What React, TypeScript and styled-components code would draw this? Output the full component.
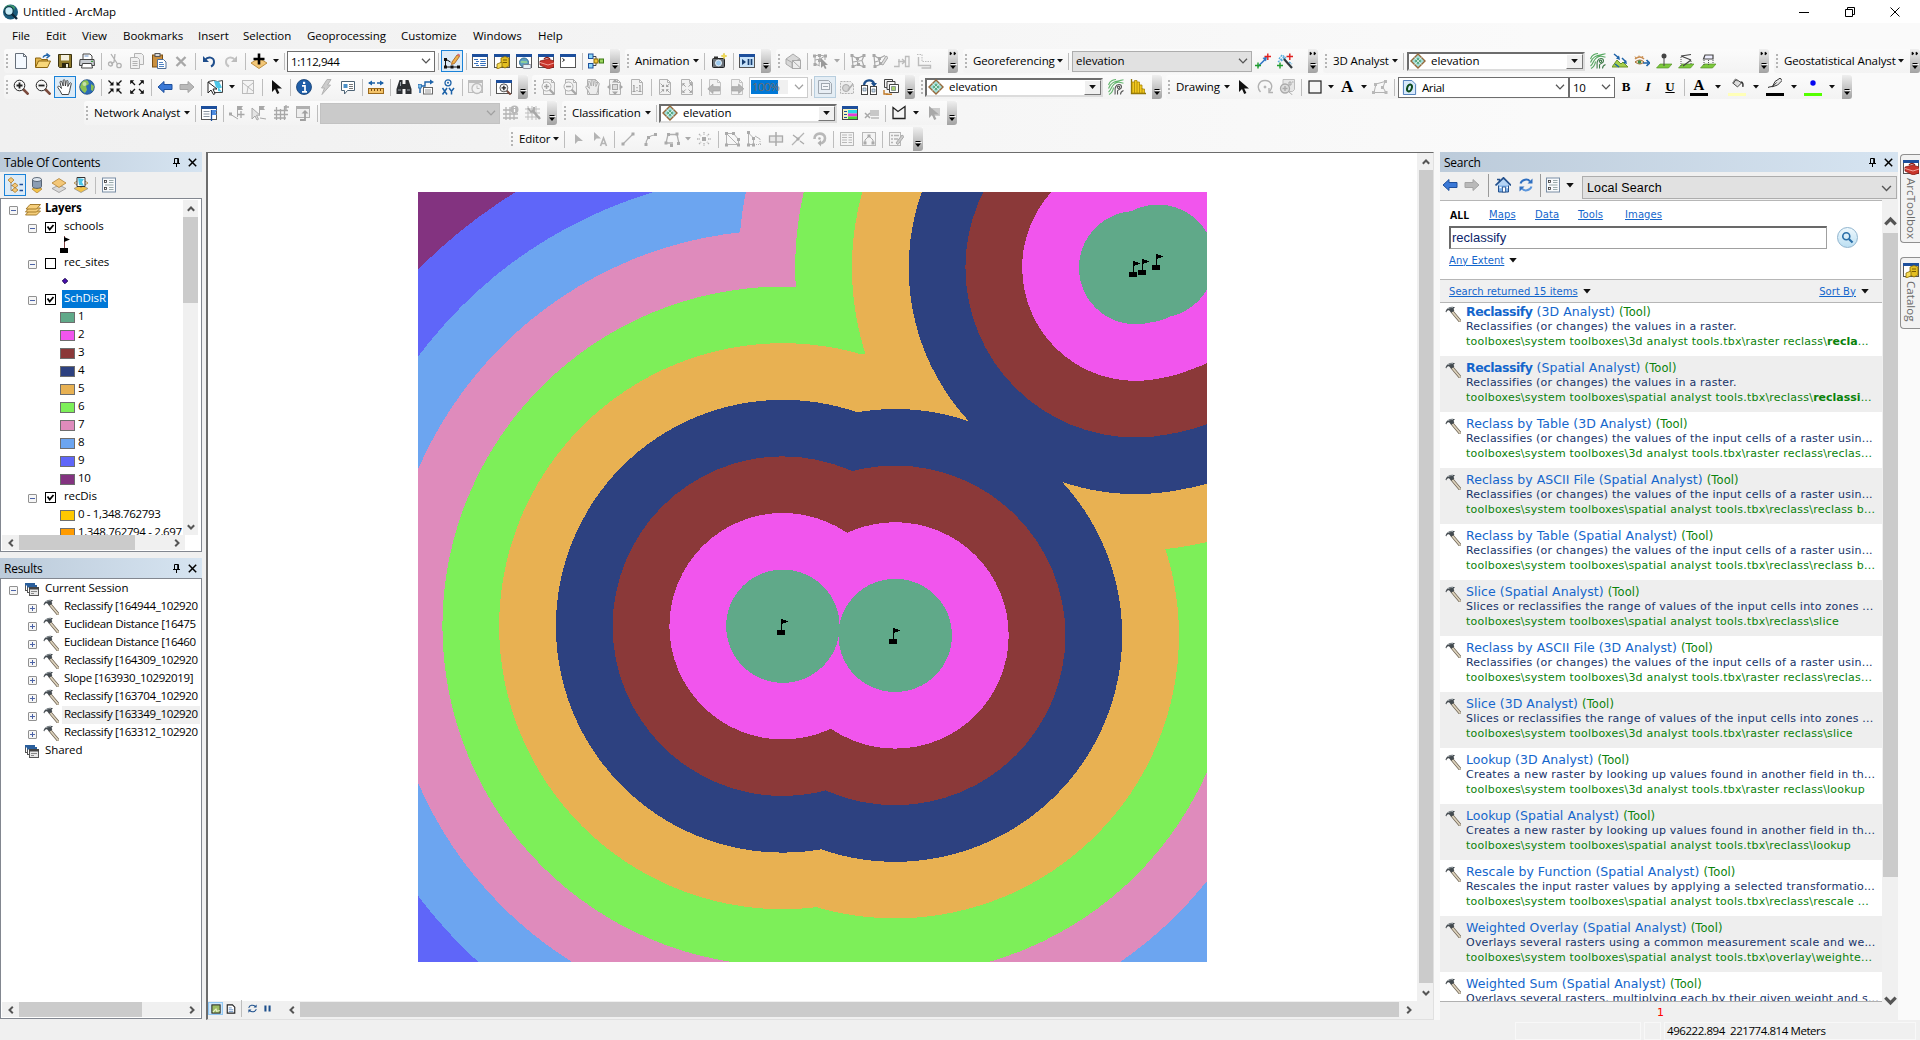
import React from 'react';
import styled, { createGlobalStyle, css } from 'styled-components';

const Global = createGlobalStyle`
  * { box-sizing: border-box; }
  body {
    margin: 0;
    overflow: hidden;
    background: #f0f0f0;
    font: 11.5px/18px 'Open Sans', 'Noto Sans', sans-serif;
    letter-spacing: -0.05px;
    color: #000;
  }
`;

/* ---------- icons ---------- */

const Svg = styled.svg`
  display: block;
  flex: none;
`;

const DIM = '#b2b2b2';

const Page = ({ c = '#7c8a9c', f = '#f4f9ff' }: { c?: string; f?: string }) => (
  <path d="M2.5 .5h8l3 3v12h-11z M10.5 .5v3h3" fill={f} stroke={c} />
);
const Win = ({ dim }: { dim?: boolean }) => (
  <>
    <rect x=".5" y="1.5" width="15" height="13" fill="#fff" stroke={dim ? DIM : '#555'} />
    <rect x="0" y="1" width="16" height="3" fill={dim ? DIM : '#1d4f9c'} />
  </>
);
const Lens = ({ sign, c = '#222', h = '#7a4a3c' }: { sign: string; c?: string; h?: string }) => (
  <>
    <path d="M10 10l5.5 5.5" stroke={h} strokeWidth="2.6" />
    <circle cx="6.5" cy="6.5" r="5.3" fill="#f6f6f6" stroke={c} strokeWidth="1" />
    <path d={sign} stroke={c} strokeWidth="1.8" />
  </>
);
const PLUS = 'M3.5 6.5h6M6.5 3.5v6';
const MINUS = 'M3.5 6.5h6';
const Handle = ({ p, c }: { p: number[][]; c: string }) => (
  <>
    {p.map(([x, y]) => (
      <rect key={`${x}-${y}`} x={x} y={y} width="3" height="3" fill={c} />
    ))}
  </>
);
const ArrowL = ({ f, s }: { f: string; s: string }) => (
  <path d="M1 8l6-5.5v3h8v5H7v3z" fill={f} stroke={s} />
);
const ArrowR = ({ f, s }: { f: string; s: string }) => (
  <path d="M15 8L9 2.5v3H1v5h8v3z" fill={f} stroke={s} />
);
const Cursor = ({ c }: { c: string }) => <path d="M4 1v12l3-3 2.2 5 2.2-1-2.2-4.6H14z" fill={c} />;
const HandShape = ({ c, f }: { c: string; f: string }) => (
  <path
    d="M5 15.5C4 13 2.5 11 .8 8.5c-.5-1 .8-1.8 1.700-1L4.500 9.500 3 3.200c0-1.200 1.500-1.400 1.900-.2L6.200 7V1.600c0-1.200 1.700-1.200 1.800 0L8.400 7l.9-4.800c.3-1.100 1.800-.9 1.700.3L10.800 7.500l1.900-3.300c.6-1 1.900-.3 1.500.8L13 10c-.3 2.500-1 4-1.500 5.500z"
    fill={f}
    stroke={c}
    strokeWidth=".9"
  />
);
const Contour = ({ a, b }: { a: string; b: string }) => (
  <g fill="none" strokeWidth="1.1">
    <path d="M.5 6C2 1.500 5 1 8 .5M.5 9.500C3 3 6 3 15.500 .8M.5 13C4 11 3 5 9 3.500c4-.8 5 1 6.500 .5M1 15.500c4-2 4-4 4.500-7" stroke={a} />
    <path d="M7 15.500c.5-3-.5-5 .5-7.500 1.500-3.500 6-3 6 0s-4 2-4 4 .2 2 0 3.500M12.500 15.500c0-2 .5-3 3-4" stroke={b} />
    <circle cx="10.500" cy="8.300" r="1.200" stroke={b} />
  </g>
);
const Diamond = () => (
  <>
    <path d="M8 1l7 7-7 7-7-7z" fill="#a7e0dc" stroke="#96683a" strokeWidth="1.400" />
    <path d="M8 4.500l3.500 3.500L8 11.500 4.500 8z" fill="#57a882" />
    <path d="M4.500 4.500l7 7M11.500 4.500l-7 7" stroke="#e8f7f0" strokeWidth=".8" />
  </>
);
const Toolbox = ({ y = 5 }: { y?: number }) => (
  <>
    <path d={`M6 ${y + 1}q3-3 6 0`} fill="none" stroke="#8c1b14" strokeWidth="1.300" />
    <path d={`M2 ${y + 3}l8-2 6 2v6l-6 2-8-4z`} fill="#c8352b" stroke="#7d130d" strokeWidth=".7" />
    <path d={`M2 ${y + 4.500}l8 2.500 6-2`} fill="none" stroke="#f0a099" />
  </>
);
const Cabinet = () => (
  <>
    <path d="M7 5l4-1.500 4 1.500v8l-4 2-4-2z" fill="#e3bf22" stroke="#8a6b00" strokeWidth=".8" />
    <path d="M3 11l5-2v5l-5 2z" fill="#f6dc55" stroke="#8a6b00" strokeWidth=".8" />
    <path d="M9 7h4M9 9.500h4" stroke="#7a5c00" />
  </>
);
const Hammer = () => (
  <>
    <path d="M7 5.500l8 9.500" stroke="#6d6253" strokeWidth="3.200" strokeLinecap="round" />
    <path d="M7 5.500l8 9.500" stroke="#ddd3bd" strokeWidth="1.800" strokeLinecap="round" />
    <path d="M.5 5.500C1.500 2.500 4 .8 7.500 .8l2.500 .4-1.500 1.600.8 1.700-2.800 2.300-2.300-2.300C3 4 2 4.600 1.200 6.500z" fill="#444b50" />
    <path d="M3 2.800C4.500 1.800 6 1.500 8 1.500" stroke="#a9b2b7" fill="none" strokeWidth=".8" />
  </>
);
const Stack = ({ top, mid }: { top: string; mid?: string }) => (
  <>
    <path d="M8 8l7 3.500-7 4-7-4z" fill={mid || '#d8d8d8'} stroke="#8a8a8a" strokeWidth=".7" />
    <path d="M8 1.500l7 4.500-7 4.500L1 6z" fill={top} stroke="#a87420" strokeWidth=".7" />
  </>
);
const Compress = ({ c }: { c: string }) => (
  <>
    <path d="M1.500 1.500l4 4M14.500 1.500l-4 4M1.500 14.500l4-4M14.500 14.500l-4-4" stroke={c} strokeWidth="1.300" />
    <path d="M6.500 2.500v4h-4zM9.500 2.500v4h4zM6.500 13.500v-4h-4zM9.500 13.500v-4h4z" fill={c} />
  </>
);
const Expand = ({ c }: { c: string }) => (
  <>
    <path d="M2 2l4 4M14 2l-4 4M2 14l4-4M14 14l-4-4" stroke={c} strokeWidth="1.300" />
    <path d="M1.200 5.200v-4h4zM14.800 5.200v-4h-4zM1.200 10.800v4h4zM14.800 10.800v4h-4z" fill={c} />
  </>
);

const icons: Record<string, React.ReactNode> = {
  app: (
    <>
      <circle cx="8.500" cy="8" r="7.500" fill="#1b5c7c" />
      <path d="M3 3c3-3 8-2 10 0l-1 4-4 1-1 4-3-2-2-4z" fill="#3f9b6a" />
      <circle cx="7" cy="7" r="4.300" fill="#c8ecf6" stroke="#10384f" strokeWidth="1.300" />
      <path d="M10 10l5 5" stroke="#10283a" strokeWidth="2.400" />
    </>
  ),
  new: <Page c="#666f7a" />,
  open: (
    <>
      <path d="M.5 14V5h5l1 1.500h6V8" fill="#e2b64f" stroke="#8c6510" />
      <path d="M.5 14.500L3.500 8h12l-3 6.500z" fill="#f8d77a" stroke="#8c6510" />
      <path d="M8 4.500C9 2 11 2 13 2.500M11.500 .5l3 2.300-3 2.400" fill="none" stroke="#1d62a8" strokeWidth="1.400" />
    </>
  ),
  save: (
    <>
      <path d="M1.500 1.500h13v13h-12l-1-1z" fill="#8f7a2c" stroke="#3b3212" />
      <rect x="4" y="2" width="8" height="5.500" fill="#f3efdf" />
      <rect x="5" y="10" width="7" height="4.500" fill="#2d2710" />
      <rect x="9" y="11" width="2" height="3.500" fill="#f3efdf" />
    </>
  ),
  print: (
    <>
      <path d="M4 6V1h7l2 2v3" fill="#fff" stroke="#444" />
      <path d="M5.500 3h4" stroke="#6a93c9" />
      <path d="M1 6.500h14l.5 6H.5z" fill="#c9cdd2" stroke="#444" />
      <path d="M3.500 10.500h9l1 4.500h-11z" fill="#fff" stroke="#444" />
      <rect x="12" y="7.800" width="2" height="1.200" fill="#3d9b3d" />
    </>
  ),
  cut: (
    <g stroke={DIM} fill="none" strokeWidth="1.300">
      <path d="M4 1l6.500 10M8 1L7 9l-3 2" />
      <circle cx="3.500" cy="11" r="2" />
      <circle cx="12" cy="12.500" r="2.200" />
    </g>
  ),
  copy: (
    <g fill="#f0f0f0" stroke={DIM}>
      <path d="M5.500 .5h7l2 2v9h-9z" />
      <path d="M1.500 4.500h7l2 2v9h-9z" />
      <path d="M3.500 8.500h5M3.500 10.500h5M3.500 12.500h5" />
    </g>
  ),
  paste: (
    <>
      <rect x="1.500" y="2" width="10" height="12" fill="#c98f3e" stroke="#7b4e12" />
      <rect x="4" y=".5" width="5" height="3" fill="#d8d8d8" stroke="#555" />
      <path d="M6.500 6.500h6l2.500 2.500v6.500H6.500z" fill="#fff" stroke="#4f6f99" />
      <path d="M8 9.500h4M8 11.500h5M8 13.500h5" stroke="#4f83c4" />
    </>
  ),
  del: <path d="M3.500 4l9 9M12.500 4l-9 9" stroke="#a8a8a8" strokeWidth="2.400" />,
  undo: (
    <>
      <path d="M2 3v6h6z" fill="#1f4e8c" />
      <path d="M4 7C7 3 13 4 13 9c0 2-1 3.500-3 4.500" fill="none" stroke="#1f4e8c" strokeWidth="2" />
    </>
  ),
  redo: (
    <>
      <path d="M14 3v6H8z" fill="#bcbcbc" />
      <path d="M12 7C9 3 3 4 3 9c0 2 1 3.500 3 4.500" fill="none" stroke="#c4c4c4" strokeWidth="2" />
    </>
  ),
  add: (
    <>
      <path d="M8 5l8 5-8 5.500L0 10z" fill="#f3c778" stroke="#b07c26" strokeWidth=".8" />
      <path d="M8 .5v11M2.500 6h11" stroke="#000" strokeWidth="2.600" />
    </>
  ),
  edit: (
    <>
      <path d="M1.500 6v8h13M1.500 6l5 3" stroke="#111" fill="none" />
      <Handle p={[[0, 5], [0, 12.500], [6.500, 12.500], [13, 12.500]]} c="#111" />
      <path d="M8 9l5-7 2.500 1.500-5 7L7.500 11.500z" fill="#f1b14a" stroke="#9c5a1a" strokeWidth=".8" />
      <path d="M13 2l1-1.500 2.500 1.500-1 1.500z" fill="#d86b6b" />
    </>
  ),
  toc: (
    <>
      <Win />
      <path d="M2 6.500h4M8 6.500h6M4 8.500h3M8.500 8.500h5M2 10.500h4M8 10.500h6M4 12.500h3M8.500 12.500h5" stroke="#3771bd" />
    </>
  ),
  catalog: (
    <>
      <Win />
      <Cabinet />
    </>
  ),
  searchwin: (
    <>
      <Win />
      <circle cx="8" cy="9.500" r="4.500" fill="#5f9fc2" stroke="#356f92" />
      <path d="M5 9.500c2-2 4 1 6-1" stroke="#8fd09a" strokeWidth="2" fill="none" />
      <rect x="7" y="11.500" width="8" height="4" rx="1" fill="#e8f2f8" stroke="#667" strokeWidth=".7" />
    </>
  ),
  toolbox: (
    <>
      <Win />
      <Toolbox />
    </>
  ),
  python: (
    <>
      <Win />
      <path d="M2.500 5.500l2 1.500-2 1.500" fill="none" stroke="#111" />
    </>
  ),
  model: (
    <>
      <path d="M4 3.500h4v9H4M8 8h6" stroke="#444" fill="none" />
      <rect x=".5" y="1" width="4.500" height="4.500" fill="#8ed8f8" stroke="#1d4f9c" />
      <rect x=".5" y="10.500" width="4.500" height="4.500" fill="#8ed8f8" stroke="#1d4f9c" />
      <rect x="6" y="6" width="4" height="4" fill="#f2c53d" stroke="#8a6b00" />
      <rect x="11.500" y="6" width="4" height="4" fill="#9ad45f" stroke="#3c7a12" />
    </>
  ),
  camera: (
    <>
      <rect x="1.500" y="5.500" width="12" height="9" rx="1" fill="#6a7178" stroke="#222" />
      <rect x="3" y="3.500" width="4" height="2" fill="#333" />
      <circle cx="7.500" cy="10" r="3" fill="#9cc9ee" stroke="#e8f0f6" />
      <path d="M13 0l.8 2.200L16 3l-2.200.8L13 6l-.8-2.200L10 3l2.200-.8z" fill="#f6e04a" stroke="#d9bd2c" strokeWidth=".5" />
    </>
  ),
  play: (
    <>
      <rect x=".5" y="1.500" width="15" height="13" fill="#c8e3fa" stroke="#555" />
      <rect x="0" y="1" width="16" height="3" fill="#1d4f9c" />
      <path d="M3 6v6l4-3z" fill="#173f73" />
      <path d="M9.500 6v6M12.500 6v6" stroke="#173f73" strokeWidth="1.700" />
    </>
  ),
  geo3d: (
    <g fill="#d8d8d8" stroke="#aaa">
      <path d="M1 6l7-5 7 5v4l-8 5-6-4z" />
      <path d="M1 6l6 3.500L15 6M7 9.500v5" fill="none" />
      <rect x="7.500" y="7.500" width="8" height="8" fill="#eee" />
      <path d="M8 8l7.500 7" fill="none" />
    </g>
  ),
  topo1: (
    <>
      <path d="M1 3l5-1 6 1M2 3v8l5 2M7 3L6 12M2 7l5-1 5-3M12 3v4" fill="none" stroke="#a8a8a8" />
      <Handle p={[[0, 1.500], [5, 1], [11, 1.500], [0.500, 10], [5, 6]]} c="#a8a8a8" />
      <path d="M8 5v10l2.300-2.300L12 16l1.500-.8-1.500-3.200h3z" fill="#9a9a9a" />
    </>
  ),
  topo2: (
    <>
      <path d="M2 2.500l5 3 7-3M2 2.500l1 11 5-2 6 2.500M14 2.500l-2 5 2 6M7 5.500l1 6M3 9l9-1.500" fill="none" stroke="#a8a8a8" strokeWidth="1.200" />
      <Handle p={[[0.500, 1], [6, 4], [12.500, 1], [1.500, 12], [7, 10], [12.500, 12]]} c="#a8a8a8" />
    </>
  ),
  topo3: (
    <>
      <path d="M2 2.500l5 3 6-3M2 2.500l1 11 5-2M7 5.500l1 6M3 9l5-1.500" fill="none" stroke="#a8a8a8" strokeWidth="1.200" />
      <Handle p={[[0.500, 1], [6, 4], [1.500, 12], [7, 9]]} c="#a8a8a8" />
      <path d="M9 11l5-8 2 1.500-5 7.500z" fill="#ddd" stroke="#a8a8a8" />
    </>
  ),
  topo4: <path d="M0 13.500h5V6M4 8.500h6M8 6l3 2.500L8 11M11.500 3.500h3.500v10h-3.500z" fill="none" stroke="#bcbcbc" strokeWidth="1.300" />,
  topo5: (
    <g fill="none" stroke="#bcbcbc">
      <path d="M1 1.500h5v7h9" strokeDasharray="1.500 1" />
      <path d="M2.500 4v8.500h12V15h-9" strokeWidth="1.400" />
    </g>
  ),
  link: (
    <>
      <path d="M3 13.500L11 5.500" stroke="#2f76c4" strokeWidth="1.600" />
      <path d="M12 3.500L7.500 5l3.500 3.500z" fill="#2f76c4" />
      <path d="M0 12.500h6M3 9.500v6" stroke="#1f9d2c" strokeWidth="1.400" />
      <path d="M9.500 3.500H16M12.800 .5v6.500" stroke="#e01f1f" strokeWidth="1.400" />
    </>
  ),
  autoreg: (
    <>
      <path d="M2 6l3-4 4 3M4 8l5-4M1 9l6-5M12 9l3 2" stroke="#58aee0" strokeWidth="1.400" strokeDasharray="2 1" fill="none" />
      <path d="M7 6l8 9" stroke="#30383c" strokeWidth="2.200" />
      <path d="M0 12.500h6M3 9.500v6" stroke="#1f9d2c" strokeWidth="1.400" />
      <path d="M9.500 3.500H16M12.800 .5v6.500" stroke="#e01f1f" strokeWidth="1.400" />
    </>
  ),
  contour: <Contour a="#55a860" b="#3e7a48" />,
  contour2: <Contour a="#62b56c" b="#555" />,
  steep: (
    <>
      <path d="M0 14l5-7 4 4 2-2 5 5z" fill="#a6cf4c" stroke="#6d9426" />
      <path d="M2 1l5 4M10 5l4 4M7 14l-4-3" stroke="#1d62a8" strokeWidth="1.500" />
      <path d="M8 7L4 5.500 7 2.500zM15 11l-4-1 3-3z" fill="#1d62a8" />
    </>
  ),
  sight: (
    <>
      <path d="M1 6q5-4 9 0" stroke="#c98d50" strokeWidth="1.600" fill="none" />
      <path d="M1 9q5-4 9 0-4 4-9 0z" fill="#f3e3c9" stroke="#a86a2c" />
      <circle cx="5.500" cy="9" r="1.800" fill="#3a8a4a" />
      <path d="M9 10h5M12.500 7l3 3-3 3" stroke="#1d62a8" strokeWidth="1.700" fill="none" />
      <path d="M2 5L1 3.500M5 4V2.500M8 4.500L9 3" stroke="#c98d50" />
    </>
  ),
  point3: (
    <>
      <path d="M4 11h12l-3.500 4H.5z" fill="#7cc83c" stroke="#4c8c1c" strokeWidth=".6" />
      <path d="M8 4v9" stroke="#444" />
      <circle cx="8" cy="3" r="2.500" fill="#444" />
    </>
  ),
  line3: (
    <>
      <path d="M4 11h12l-3.500 4H.5z" fill="#7cc83c" stroke="#4c8c1c" strokeWidth=".6" />
      <path d="M3 3l10-1.500M3 3l10 4M13 7l-8 6" fill="none" stroke="#444" strokeWidth="1.200" />
      <path d="M3 4v9M13 8v4" stroke="#555" strokeDasharray="1 1" />
    </>
  ),
  poly3: (
    <>
      <path d="M4 11h12l-3.500 4H.5z" fill="#7cc83c" stroke="#4c8c1c" strokeWidth=".6" />
      <path d="M5 2h8v4H3.500z" fill="#eef" stroke="#444" strokeWidth="1.200" />
      <path d="M4 7v6M13 7v4M8.500 7v6" stroke="#555" strokeDasharray="1 1" />
    </>
  ),
  zoomin: <Lens sign={PLUS} />,
  zoomout: <Lens sign={MINUS} />,
  hand: <HandShape c="#333" f="#fff" />,
  globe: (
    <>
      <circle cx="8" cy="8" r="7.300" fill="#2b6cb8" stroke="#1c4a80" strokeWidth=".8" />
      <path d="M3 3c2-2 5-2 6-1l1 3-3 2 1 4-2 3c-2-1-4-3-5-6z" fill="#8cc152" />
      <path d="M12 5l3 2-1 5-2-1z" fill="#8cc152" />
      <circle cx="5.500" cy="5" r="2" fill="#fff" opacity=".5" />
    </>
  ),
  fixin: <Compress c="#111" />,
  fixout: <Expand c="#111" />,
  back: <ArrowL f="#3a78d6" s="#1d4f9c" />,
  fwd: <ArrowR f="#b9b9b9" s="#a4a4a4" />,
  select: (
    <>
      <path d="M1.500 2.500l5-1 4 1 5-1v12h-9z" fill="#fff" stroke="#444" />
      <path d="M7 2l5 .5 3 6-3 1-3-1z M11 8l4 5-4-1z" fill="#4cc6e8" />
      <path d="M1 3v11l3-3 2.500 4.500 1.500-.8L6 10h4z" fill="#fff" stroke="#222" />
    </>
  ),
  clear: (
    <g fill="none" stroke="#bbb">
      <rect x="2.500" y="1.500" width="11" height="13" fill="#f4f4f4" />
      <path d="M3 4l5 4 5-4M8 8l-1 6M8 8l5 4" />
    </g>
  ),
  pointer: <Cursor c="#111" />,
  info: (
    <>
      <circle cx="8" cy="8" r="7.500" fill="#1f5ea8" stroke="#123c70" strokeWidth=".8" />
      <path d="M6 6.800h3v6M6 12.800h5" stroke="#fff" strokeWidth="1.700" fill="none" />
      <rect x="7" y="2.800" width="2.200" height="2.200" fill="#fff" />
    </>
  ),
  bolt: <path d="M9 .5h4L9.500 6h3L4 15.500 6.500 9H3.500z" fill="#ccc" stroke={DIM} />,
  html: (
    <>
      <path d="M1.500 2.500h13v9h-7l-3 3.500v-3.500h-3z" fill="#fff" stroke="#4e6476" />
      <rect x="3.500" y="5" width="4" height="4" fill="#4a90c8" />
      <path d="M9 5.500h4M9 7.500h4M9 9.500h4" stroke="#777" />
    </>
  ),
  measure: (
    <>
      <path d="M1 4h14" stroke="#1d62a8" strokeWidth="1.300" strokeDasharray="6 2" />
      <path d="M0 4l4-2.500v5zM16 4l-4-2.500v5z" fill="#1d62a8" />
      <rect x=".5" y="9.500" width="15" height="5" fill="#f3c36a" stroke="#9c6a1c" />
      <path d="M3.500 10v2M6.500 10v2M9.500 10v2M12.500 10v2" stroke="#7a4a0c" />
    </>
  ),
  find: (
    <>
      <path d="M3.500 1h3v4h3V1h3l3 9v5h-6v-5h-3v5h-6v-5z" fill="#2c2f33" />
      <path d="M2 11h3M11 11h3M4.500 3v4" stroke="#9aa3ab" />
    </>
  ),
  route: (
    <>
      <path d="M2 14V7h5V3h6" fill="none" stroke="#1d62a8" strokeWidth="1.400" />
      <path d="M12 .5l4 2.500-4 2.500z" fill="#1d62a8" />
      <rect x="0" y="5.500" width="3.500" height="3.500" fill="#7ec0ea" stroke="#1d62a8" strokeWidth=".7" />
      <rect x="5.500" y="8.500" width="9" height="6.500" fill="#fff" stroke="#666" />
      <path d="M7 11h6M7 13h6" stroke="#999" />
    </>
  ),
  xy: (
    <>
      <circle cx="8" cy="3.800" r="3" fill="none" stroke="#1d62a8" strokeWidth="1.300" />
      <circle cx="8" cy="3.800" r="1" fill="#1d62a8" />
      <path d="M2.500 9l4.500 6.500M7 9l-4.500 6.500M9 9l2.500 3.200L14 9M11.500 12v3.500" stroke="#1d62a8" strokeWidth="1.500" fill="none" />
    </>
  ),
  clock: (
    <g fill="none" stroke="#bdbdbd">
      <rect x=".5" y="1.500" width="14" height="12" fill="#eee" />
      <path d="M.5 3h14" strokeWidth="2" />
      <circle cx="9" cy="9.500" r="5" fill="#f2f2f2" strokeWidth="1.300" />
      <path d="M9 6.500v3h2.500" />
    </g>
  ),
  viewer: (
    <>
      <Win />
      <g transform="translate(3 4) scale(.75)">
        <Lens sign={PLUS} />
      </g>
    </>
  ),
  pzin: (
    <>
      <Page c={DIM} f="#f2f2f2" />
      <g transform="translate(0 2) scale(.85)"><Lens sign={PLUS} c="#a6a6a6" h="#a6a6a6" /></g>
    </>
  ),
  pzout: (
    <>
      <Page c={DIM} f="#f2f2f2" />
      <g transform="translate(0 2) scale(.85)"><Lens sign={MINUS} c="#a6a6a6" h="#a6a6a6" /></g>
    </>
  ),
  phand: (
    <>
      <Page c={DIM} f="#f2f2f2" />
      <HandShape c="#a8a8a8" f="#ececec" />
    </>
  ),
  pfull: (
    <>
      <Page c={DIM} f="#f2f2f2" />
      <path d="M8 0l3 3.500H5zM8 16l3-3.500H5zM0 8l3.500-3v6zM16 8l-3.500-3v6z" fill="#a8a8a8" />
      <rect x="5.500" y="5.500" width="5" height="5" fill="#ddd" stroke="#a8a8a8" />
    </>
  ),
  pone: (
    <>
      <Page c={DIM} f="#f2f2f2" />
      <path d="M4 6.500h1v6M3.500 12.500h3M10 6.500h1v6M9.500 12.500h3M8 8v1.300M8 11v1.300" stroke="#a0a0a0" strokeWidth="1.200" fill="none" />
    </>
  ),
  pfixin: (
    <>
      <Page c={DIM} f="#f2f2f2" />
      <g transform="translate(2.500 3.500) scale(.7)"><Compress c="#9c9c9c" /></g>
    </>
  ),
  pfixout: (
    <>
      <Page c={DIM} f="#f2f2f2" />
      <g transform="translate(2.500 3.500) scale(.7)"><Expand c="#9c9c9c" /></g>
    </>
  ),
  pback: (
    <>
      <Page c="#c4c4c4" f="#f2f2f2" />
      <g transform="translate(0 3) scale(.85)"><ArrowL f="#b4b4b4" s="#a6a6a6" /></g>
    </>
  ),
  pfwd: (
    <>
      <Page c="#c4c4c4" f="#f2f2f2" />
      <g transform="translate(2 3) scale(.85)"><ArrowR f="#b4b4b4" s="#a6a6a6" /></g>
    </>
  ),
  draft: (
    <>
      <path d="M1.500 1.500h10l3 3v10h-13z" fill="#e8eef4" stroke="#a0a8b0" />
      <rect x="4.500" y="4.500" width="8" height="6" fill="#f4f7fa" stroke="#a0a8b0" />
      <path d="M6 7.500h5" stroke="#a0a8b0" />
    </>
  ),
  focus: (
    <>
      <path d="M1.500 2.500h10l3 3v9h-13z" fill="#eee" stroke="#b4b4b4" strokeDasharray="2 1" />
      <circle cx="7" cy="9" r="3.500" fill="#d4d4d4" stroke="#aaa" />
      <path d="M9 11l5-6" stroke="#b0b0b0" strokeWidth="1.500" />
    </>
  ),
  layout: (
    <>
      <path d="M3 6C4 0 12 0 13 5" fill="none" stroke="#1d4f8c" strokeWidth="2.400" />
      <path d="M10 4h6l-3 4z" fill="#1d4f8c" />
      <rect x=".5" y="6.500" width="6" height="9" fill="#fff" stroke="#444" />
      <rect x="9.500" y="7.500" width="6" height="8" fill="#fff" stroke="#444" />
      <path d="M2 9h3v3H2zM11 10h3v3h-3z" fill="#c8dcec" stroke="#567" strokeWidth=".6" />
    </>
  ),
  pages: (
    <>
      <path d="M1.500 .5h8v8h-8z" fill="#f4f4f4" stroke="#444" />
      <path d="M4 2.500h8v8H4z" fill="#f4f4f4" stroke="#444" />
      <path d="M6.500 5.500h9v8h-9z" fill="#fff" stroke="#444" />
      <path d="M8.500 7.500h4v4h-4z" fill="#a8cf6c" stroke="#567" strokeWidth=".6" />
      <path d="M1 11v4h4M9 15.200H3" stroke="#c07a28" strokeWidth="1.400" fill="none" />
    </>
  ),
  diamond: <Diamond />,
  histogram: (
    <>
      <path d="M1.500 0v14.500H16" stroke="#8c7406" fill="none" strokeWidth="1.300" />
      <path d="M2 14V3h2.500V1.500H7V3h2.500v3H12v4h2.500v4z" fill="#f2c81c" stroke="#a8860a" strokeWidth=".8" />
      <path d="M4.500 3v11M7 3v11M9.500 5v9M12 9v5" stroke="#a8860a" strokeWidth=".8" />
    </>
  ),
  rotate: (
    <g fill="none" stroke={DIM}>
      <path d="M3.500 13C-1 8 2 1.500 8 1.500s9 6 4.500 11" strokeWidth="1.400" />
      <path d="M12 9v4.500h4" strokeWidth="1.400" />
      <circle cx="8" cy="8" r="1" fill={DIM} />
    </g>
  ),
  graphics: (
    <>
      <path d="M4 .500h11.500v10l-2 2H4z" fill="#e6e6e6" stroke="#bdbdbd" />
      <circle cx="6" cy="9.500" r="4.500" fill="#ddd" stroke="#aaa" strokeWidth="1.300" />
      <path d="M3.500 9.500h5M6 7v5" stroke="#aaa" strokeWidth="1.400" />
      <path d="M9.500 12.500l4 3.500M10 3h2v3h-2zM13 3h1.500" stroke="#aaa" fill="none" />
    </>
  ),
  rect: <rect x="2" y="2" width="12" height="12" fill="#f6f6f6" stroke="#222" strokeWidth="1.200" />,
  verts: (
    <>
      <path d="M2 13.500L4 5l9-2.500-2 6 3 5z" fill="none" stroke={DIM} />
      <Handle p={[[2, 4], [12, 1], [0, 12], [9, 7], [12.500, 12]]} c="#b8b8b8" />
    </>
  ),
  fontdoc: (
    <>
      <path d="M1.500 .5h9l4 4v11h-13z" fill="#d7e9fb" stroke="#4779b8" />
      <ellipse cx="8" cy="8.500" rx="2.400" ry="3.800" transform="rotate(20 8 8.500)" fill="none" stroke="#0c4a1c" strokeWidth="2.100" />
    </>
  ),
  bucket: (
    <>
      <path d="M2 6l5-4 6 4-5 5z" fill="#ddd" stroke="#444" strokeWidth="1.200" />
      <path d="M4 6C3 2 6-.5 7.500 4" fill="none" stroke="#444" />
      <path d="M12 5c3 0 3 3 2.500 6" stroke="#333" strokeWidth="1.800" fill="none" />
    </>
  ),
  pen: (
    <>
      <path d="M0 11c2-2 4 0 6-2" stroke="#333" fill="none" strokeWidth="1.300" />
      <path d="M5 10l3-6 6-4 2 3-5 5z" fill="#e8e8e8" stroke="#333" strokeWidth="1.100" />
      <path d="M5 10l5-5" stroke="#333" />
    </>
  ),
  dot: <circle cx="8" cy="5" r="2.700" fill="#0707f0" />,
  nawin: (
    <>
      <Win />
      <path d="M2.500 6.500h6M2.500 9h6M2.500 11.500h6" stroke="#8a94a0" />
      <path d="M10.500 5v11" stroke="#1d4f9c" strokeWidth="1.300" />
      <path d="M11 5h5l-1.500 2.500L16 10h-5z" fill="#4b8be0" />
    </>
  ),
  naflag: (
    <>
      <path d="M1 9l8 5M8.500 1v11" stroke="#a8a8a8" />
      <path d="M9 1h5l-1.500 2L14 5H9z" fill="#a8a8a8" />
      <Handle p={[[0, 7.500]]} c="#a8a8a8" />
      <path d="M12 6v7M8.500 9.500h7" stroke="#a8a8a8" strokeWidth="1.300" />
    </>
  ),
  nasel: (
    <>
      <path d="M8.500 1v9M9 13l6 1" stroke="#a8a8a8" />
      <path d="M9 1h5l-1.500 2L14 5H9z" fill="#a8a8a8" />
      <path d="M1 3v11l3-3 2 4 1.500-.8-2-4H9z" fill="#e4e4e4" stroke="#a8a8a8" />
    </>
  ),
  nasolve: <path d="M3.500 2v13M7.500 4v11M11.500 1v14M1 5.500h14M1 9.500h14M1 13h12M11 2h5M13 0v5" stroke="#a8a8a8" strokeWidth="1.300" fill="none" />,
  nadir: (
    <>
      <rect x="1.500" y="1.500" width="13" height="11" fill="#eee" stroke="#b0b0b0" />
      <rect x="1" y="1" width="14" height="3" fill="#b0b0b0" />
      <path d="M5 15h5V7" stroke="#a0a0a0" strokeWidth="1.800" fill="none" />
      <path d="M6.500 8.500L10 5l3.500 3.500z" fill="#a0a0a0" />
    </>
  ),
  nainfo: (
    <>
      <path d="M3 2v13M7 2v13M11 8v7M0 5h9M0 9h15M0 13h15" stroke="#b4b4b4" strokeWidth="1.300" />
      <circle cx="11.500" cy="4.500" r="4" fill="#b8b8b8" />
      <path d="M11.500 4v3M11.500 2v1" stroke="#fff" strokeWidth="1.300" />
    </>
  ),
  natool: (
    <>
      <path d="M3 1v14M7 1v14M11 1v14M0 4h15M0 8h15M0 12h15" stroke="#bdbdbd" />
      <path d="M7 5l8 9" stroke="#a8a8a8" strokeWidth="2.600" />
      <path d="M3 3l3 4 3-1V2" stroke="#a8a8a8" strokeWidth="1.800" fill="none" />
    </>
  ),
  classes: (
    <>
      <rect x=".5" y="1.500" width="15" height="13" fill="#f7f3c0" stroke="#444" />
      <rect x="0" y="1" width="16" height="3" fill="#1d4f9c" />
      <rect x="6" y="5" width="9" height="3.500" fill="#2ad8e6" />
      <rect x="6" y="8.500" width="9" height="3" fill="#e63ad8" />
      <rect x="6" y="11.500" width="9" height="2.500" fill="#4ad83a" />
      <path d="M2 6.500h3M2 9.500h3M2 12.500h3" stroke="#1d4f9c" />
    </>
  ),
  clearcls: (
    <>
      <rect x="6" y="5" width="9" height="6" fill="#c8c8c8" />
      <path d="M1 8l5 5M6 8l-5 5" stroke="#a8a8a8" strokeWidth="1.500" />
      <path d="M7 13h8" stroke="#c8c8c8" strokeWidth="2" />
    </>
  ),
  polygon: <path d="M2 2.500l5 4 7-5v12H2z" fill="#f4f4f4" stroke="#222" strokeWidth="1.300" />,
  clspick: (
    <>
      <rect x="7" y="3" width="8" height="8" fill="#ccc" />
      <Cursor c="#a8a8a8" />
    </>
  ),
  ed1: <path d="M5 3v10l3-3h5z" fill="#b4b4b4" />,
  ed2: (
    <>
      <path d="M2 1v9l2.500-2.500H9z" fill="#b4b4b4" />
      <path d="M8.500 15l3-8 3 8M9.500 12.500h4" stroke="#b4b4b4" strokeWidth="1.600" fill="none" />
    </>
  ),
  edline: (
    <>
      <path d="M3 13L13 3" stroke="#b0b0b0" strokeWidth="1.200" />
      <Handle p={[[1.500, 11.500], [11.500, 1.500]]} c="#aaa" />
    </>
  ),
  edarc: (
    <>
      <path d="M4 14C4 8 7 4 14 4" stroke="#b0b0b0" strokeWidth="1.200" fill="none" />
      <Handle p={[[2.500, 12], [5, 5], [12, 2]]} c="#aaa" />
    </>
  ),
  edtrace: (
    <>
      <path d="M4 3.500h9l2 9M4 3.500L2 12h7" stroke="#b0b0b0" fill="none" strokeWidth="1.300" />
      <Handle p={[[3, 2], [11.500, 1.500], [0.500, 10.500], [6, 13], [13, 11]]} c="#aaa" />
    </>
  ),
  edpoint: (
    <>
      <rect x="6" y="6" width="4" height="4" fill="#aaa" />
      <path d="M8 1v3M8 12v3M1 8h3M12 8h3M3 3l2 2M13 3l-2 2M3 13l2-2M13 13l-2-2" stroke="#b4b4b4" strokeDasharray="1.500 .7" strokeWidth="1.300" />
    </>
  ),
  edv1: (
    <>
      <path d="M2.500 2.500h7l5 6v5h-12zM2.500 2.500l11 11" stroke="#b4b4b4" fill="none" />
      <Handle p={[[1, 1], [8, 1], [13, 7], [13, 12.500], [1, 12.500]]} c="#aaa" />
    </>
  ),
  edv2: (
    <>
      <path d="M2.500 2v11.500h5V7zM9 5l5 3" stroke="#b4b4b4" fill="none" />
      <path d="M10 13.500h5M14 8v5" stroke="#b4b4b4" strokeDasharray="1 1" />
      <Handle p={[[1, 0], [1, 12.500], [6, 12.500], [6, 6]]} c="#aaa" />
    </>
  ),
  edv3: (
    <>
      <rect x="1.500" y="5" width="13" height="6" fill="#e8e8e8" stroke="#aaa" strokeWidth="1.300" />
      <path d="M8 1v14" stroke="#aaa" strokeWidth="1.500" />
    </>
  ),
  edv4: (
    <>
      <path d="M2 14L14 2" stroke="#b4b4b4" strokeWidth="1.300" />
      <path d="M3 4l4 3M10 10l4 3" stroke="#aaa" strokeWidth="1.300" />
      <rect x="6.500" y="6.500" width="3" height="3" fill="#aaa" />
    </>
  ),
  edv5: (
    <>
      <path d="M2.500 8C2 1 13 1 13 7c0 3-2 5-5 5.500" stroke="#b8b8b8" strokeWidth="2.600" fill="none" />
      <path d="M9 9v6.500L5.500 12z" fill="#b0b0b0" />
      <circle cx="7.500" cy="7.500" r="1.300" fill="#b0b0b0" />
    </>
  ),
  edt1: (
    <g stroke="#b8b8b8" fill="#f4f4f4">
      <rect x="1.500" y="1.500" width="13" height="13" />
      <path d="M3 4h5M3 6.500h5M3 9h5M3 11.500h5M9.500 4H13M9.500 6.500H13M9.500 9H13M9.500 11.500H13" />
    </g>
  ),
  edt2: (
    <>
      <rect x="1.500" y="1.500" width="13" height="13" fill="#f4f4f4" stroke="#b8b8b8" />
      <path d="M4 12V9l4-4 4 4v3" stroke="#aaa" fill="none" />
      <Handle p={[[2.500, 10.500], [6.500, 3.500], [10.500, 10.500]]} c="#aaa" />
    </>
  ),
  edt3: (
    <>
      <rect x="1.500" y="1.500" width="11" height="13" fill="#f4f4f4" stroke="#b8b8b8" />
      <path d="M3 4.500h2M6 4.500h5M3 8h2M6 8h4M3 11.500h2" stroke="#b4b4b4" strokeWidth="1.300" />
      <path d="M8 12l6-8 2 1.500-6 8z" fill="#ccc" stroke="#aaa" />
    </>
  ),
  bydraw: (
    <>
      <path d="M4 6v7.500h5M4 8.500h5" stroke="#888" fill="none" />
      <path d="M4 .5l3 2.500-3 3-3-3zM8 6l3 2.500-3 2.500-3-2.500zM8 10.500l3 2.500-3 2.500-3-2.500z" fill="#f3c778" stroke="#b07c26" strokeWidth=".8" />
      <path d="M12.500 7.500H16M12.500 13.500H16" stroke="#1d4f9c" strokeWidth="1.600" />
    </>
  ),
  bysource: (
    <>
      <path d="M8 9l5 3-5 4-5-4z" fill="#f3c34a" stroke="#b07c26" strokeWidth=".7" />
      <path d="M3.500 2.500v7c0 2.500 9 2.500 9 0v-7" fill="#8b9db3" stroke="#3c4a5c" strokeWidth=".8" />
      <ellipse cx="8" cy="2.500" rx="4.500" ry="2" fill="#dfe7f0" stroke="#3c4a5c" strokeWidth=".8" />
    </>
  ),
  byvis: <Stack top="#f3c778" />,
  bysel: (
    <>
      <Stack top="#e8e8e8" mid="#f3c34a" />
      <path d="M4 .5h8v9H4z" fill="#fff" stroke="#333" />
      <path d="M5 1l6 1-2 3 2 4-5-1z" fill="#4cc6e8" />
    </>
  ),
  options: (
    <>
      <rect x="1.500" y="1" width="13" height="14" fill="#f8fafc" stroke="#7a8ea5" />
      <rect x="3.500" y="3.500" width="2" height="2" fill="none" stroke="#333" strokeWidth=".8" />
      <rect x="3.500" y="10.500" width="2" height="2" fill="none" stroke="#333" strokeWidth=".8" />
      <path d="M8 3.500h4.500M8 5.500h4.500M4 8h8.500M8 10.500h4.500M8 12.500h4.500" stroke="#9aa" />
    </>
  ),
  layers: (
    <g fill="#f6cf7c" stroke="#9c7220" strokeWidth=".9">
      <path d="M4 10h11.500l-4 4H.5z" />
      <path d="M4 7h11.500l-4 4H.5z" />
      <path d="M5 3.500h10.500l-4 4.500H1z" />
    </g>
  ),
  hammer: <Hammer />,
  session: (
    <>
      <rect x="1.500" y="2.500" width="9" height="7" fill="#fff" stroke="#555" />
      <rect x="1" y="2" width="10" height="2.500" fill="#2a5f9c" />
      <rect x="3.500" y="4.500" width="9" height="7" fill="#fff" stroke="#555" />
      <rect x="3" y="4" width="10" height="2.500" fill="#2a5f9c" />
      <rect x="5.500" y="6.500" width="9" height="8" fill="#e8e8e8" stroke="#555" />
      <rect x="5" y="6" width="10" height="2.500" fill="#444" />
      <path d="M7 10.500h6M7 12.500h3" stroke="#888" />
    </>
  ),
  home: (
    <>
      <path d="M3.500 8v7h10V8" fill="#7fb2ea" stroke="#23508c" />
      <path d="M2 2.500h2.500V6" fill="none" stroke="#23508c" strokeWidth="1.500" />
      <path d="M.5 8.500L8.500 .8l7.500 7.700" fill="#b5d4f4" stroke="#23508c" strokeWidth="1.700" />
      <rect x="7.500" y="10" width="3" height="5" fill="#fff" stroke="#23508c" strokeWidth=".8" />
      <path d="M4.500 10.500h2M11.500 10.500h1.500" stroke="#fff" strokeWidth="1.500" />
    </>
  ),
  refresh: (
    <g fill="none" strokeWidth="2">
      <path d="M2.500 6.500C4 2 10 1.500 12 4.500" stroke="#2f6fc0" />
      <path d="M13.500 9.500C12 14 6 14.500 4 11.500" stroke="#5b96dc" />
      <path d="M14.500 1.500v5H9.500zM1.500 14.500v-5h5z" fill="#2f6fc0" stroke="none" />
    </g>
  ),
  dataview: (
    <>
      <rect x="2.500" y="2.500" width="11" height="11" fill="#9cbc64" stroke="#222" strokeWidth="1.300" />
      <path d="M4 12l4-4 1 3 4-1" stroke="#e8f0c8" fill="none" strokeWidth="1.500" />
    </>
  ),
  layoutview: (
    <>
      <path d="M3 2.500h7l3 3v8H3z" fill="#fff" stroke="#222" strokeWidth="1.500" />
      <path d="M5 6.500h4M5 9h6M5 11.500h6" stroke="#4779b8" />
    </>
  ),
  refreshview: (
    <g fill="none" stroke="#1d4f8c" strokeWidth="1.500">
      <path d="M2.500 7C3.500 3 9 2 12 5M13.500 9C12.500 13 7 14 4 11" />
      <path d="M14 2v4.500H9.500zM2 14V9.500h4.500z" fill="#1d4f8c" stroke="none" />
    </g>
  ),
  pause: <path d="M5 3.500v9M11 3.500v9" stroke="#1d4f8c" strokeWidth="3" />,
  magnify: (
    <>
      <circle cx="6.500" cy="6.500" r="4.300" fill="none" stroke="#2a6fa8" strokeWidth="2" />
      <path d="M9.700 9.700l4.500 4.500" stroke="#2a6fa8" strokeWidth="2.600" />
    </>
  ),
};

const Icon = ({ name, size = 16 }: { name: string; size?: number }) => (
  <Svg width={size} height={size} viewBox="0 0 16 16">
    {icons[name]}
  </Svg>
);

const Caret = ({ c = '#111', w = 6 }: { c?: string; w?: number }) => (
  <Svg width={w} height={w / 2 + 1} viewBox="0 0 6 4">
    <path d="M0 0h6L3 3.500z" fill={c} />
  </Svg>
);
const turns = { up: 0, right: 90, down: 180, left: 270 };
const Chevron = ({ dir, size = 8, c = '#555', t = 2 }: { dir: keyof typeof turns; size?: number; c?: string; t?: number }) => (
  <Svg width={size} height={size} viewBox="0 0 8 8">
    <path d="M.8 5.800L4 2.500l3.200 3.300" fill="none" stroke={c} strokeWidth={t} transform={`rotate(${turns[dir]} 4 4)`} />
  </Svg>
);

/* ---------- window frame ---------- */

const Shell = styled.div`
  width: 1920px;
  height: 1040px;
  display: flex;
  flex-direction: column;
  overflow: hidden;
`;
const TitleBar = styled.header`
  height: 23px;
  padding-left: 2px;
  display: flex;
  align-items: center;
  gap: 5px;
  background: #fff;
`;
const WindowButtons = styled.div`
  margin-left: auto;
  display: flex;
  align-items: center;
  width: 138px;
  justify-content: space-between;
  padding: 0 20px 0 17px;
`;
const Dock = styled.div`
  height: 129px;
  background: linear-gradient(90deg, #f0f0f0 0, #f6f6f6 50%, #fafafa 80%);
`;
const MenuBar = styled.nav`
  height: 26px;
  padding-left: 12px;
  display: flex;
  align-items: center;
`;
const MenuItem = styled.span<{ $w: number }>`
  width: ${p => p.$w}px;
  white-space: nowrap;
`;
const BarRow = styled.div<{ $start: number; $gap?: number }>`
  display: flex;
  gap: ${p => p.$gap ?? 5}px;
  height: 24px;
  margin-bottom: 2px;
  padding-left: ${p => p.$start}px;
`;
const Bar = styled.div<{ $w: number }>`
  flex: none;
  width: ${p => p.$w}px;
  display: flex;
  align-items: center;
  border-radius: 3px 0 0 3px;
  background: linear-gradient(#fbfbfb, #f3f3f3);
`;
const Grip = styled.i`
  flex: none;
  width: 2px;
  height: 15px;
  margin: 0 2px;
  background: repeating-linear-gradient(#b4b4b4 0 2px, transparent 2px 4px);
`;
const Sep = styled.i<{ $w?: number }>`
  flex: none;
  width: ${p => p.$w ?? 6}px;
  height: 17px;
  background: linear-gradient(#bdbdbd, #bdbdbd) 50% 0 / 1px 100% no-repeat;
`;
const Cell = styled.span<{ $on?: boolean; $pale?: boolean }>`
  flex: none;
  width: 22px;
  height: 22px;
  display: flex;
  align-items: center;
  justify-content: center;
  ${p => p.$on && css`border: 1px solid #1a82d8; background: #dcebf7;`}
  ${p => p.$pale && css`border: 1px solid #b8cede; background: #e4edf4;`}
`;
const Drop = styled.span<{ $w?: number }>`
  flex: none;
  width: ${p => p.$w ?? 11}px;
  display: flex;
  justify-content: center;
`;
const MenuButton = styled.span<{ $w: number }>`
  flex: none;
  width: ${p => p.$w}px;
  padding: 0 2px 0 4px;
  display: flex;
  align-items: center;
  justify-content: space-between;
  white-space: nowrap;
  letter-spacing: -0.1px;
`;
const Spacer = styled.i<{ $w: number }>`
  flex: none;
  width: ${p => p.$w}px;
`;
const OverflowBox = styled.span`
  flex: none;
  width: 10px;
  height: 24px;
  margin-left: auto;
  padding-bottom: 2px;
  display: flex;
  flex-direction: column;
  justify-content: flex-end;
  align-items: center;
  gap: 1px;
  border-radius: 0 3px 3px 0;
  background: linear-gradient(#efefef, #a2a2a2);
`;
const Overflow = ({ more }: { more?: boolean }) => (
  <OverflowBox>
    <Svg width="8" height="22" viewBox="0 0 8 22">
      {more && <path d="M1 3l2 1.500L1 6zM5 3l2 1.500L5 6z" fill="#000" stroke="#000" strokeWidth=".6" />}
      <path d="M1.500 14.500h5" stroke="#000" />
      <path d="M1 16.500h6l-3 3.500z" fill="#000" />
      <path d="M2 15.500h6" stroke="#fff" strokeWidth=".8" />
    </Svg>
  </OverflowBox>
);

type ComboKind = 'plain' | 'classic' | 'shaded' | 'disabled' | 'faint';
const ComboBox = styled.span<{ $w: number; $kind: ComboKind }>`
  flex: none;
  width: ${p => p.$w}px;
  height: 21px;
  padding-left: 3px;
  display: flex;
  align-items: center;
  gap: 5px;
  white-space: nowrap;
  background: #fff;
  border: 1px solid #6e6e6e;
  ${p => p.$kind === 'plain' && css`line-height: 17px; letter-spacing: -0.4px;`}
  ${p => p.$kind === 'faint' && css`padding-left: 1px; gap: 0; border-color: #cccccc;`}
  ${p => p.$kind === 'classic' && css`
    height: 19px;
    padding-left: 1px;
    border: 2px solid;
    border-color: #6d6d6d #dcdcdc #dcdcdc #6d6d6d;
  `}
  ${p => p.$kind === 'shaded' && css`background: #e1e1e1; border-color: #adadad;`}
  ${p => p.$kind === 'disabled' && css`background: #cacaca; border-color: #c2c2c2;`}
`;
const ComboEnd = styled.span<{ $raised?: boolean }>`
  flex: none;
  margin-left: auto;
  width: 17px;
  height: 100%;
  display: flex;
  align-items: center;
  justify-content: center;
  ${p => p.$raised && css`
    background: #f0f0f0;
    border: 1px solid;
    border-color: #fff #777 #777 #fff;
  `}
`;
const Combo = ({ w, kind = 'plain', icon, children }: { w: number; kind?: ComboKind; icon?: string; children?: React.ReactNode }) => (
  <ComboBox $w={w} $kind={kind}>
    {icon && <Icon name={icon} size={kind === 'classic' ? 16 : 15} />}
    {children}
    <ComboEnd $raised={kind === 'classic'}>
      {kind === 'classic' ? <Caret w={7} /> : <Chevron dir="down" t={1} size={10} c={kind === 'disabled' || kind === 'faint' ? '#a0a0a0' : '#555'} />}
    </ComboEnd>
  </ComboBox>
);
const Percent = styled.span`
  flex: none;
  height: 14px;
  width: 37px;
  padding-left: 1px;
  background: linear-gradient(90deg, #0078d7 27px, #f0f0f0 27px);
  color: #6d6d6d;
  line-height: 13px;
  letter-spacing: -0.5px;
`;
const Glyph = styled.span<{ $b?: boolean; $i?: boolean; $u?: boolean }>`
  font: ${p => (p.$i ? 'italic' : 'normal')} bold 13px/16px 'Liberation Serif', serif;
  ${p => p.$u && css`text-decoration: underline;`}
`;
const BigA = styled.span`
  font: bold 17px/18px 'Liberation Serif', serif;
`;
const Swatched = styled.span<{ $c: string }>`
  width: 18px;
  height: 18px;
  display: flex;
  justify-content: center;
  align-items: flex-start;
  font: bold 15px/15px 'Liberation Serif', serif;
  background: linear-gradient(${p => p.$c}, ${p => p.$c}) 0 100% / 100% 3px no-repeat;
`;

const Cells = ({ names }: { names: string }) => (
  <>
    {names.split(' ').map(n => <Cell key={n}><Icon name={n} /></Cell>)}
  </>
);

const Toolbars = () => (
  <>
    <BarRow $start={4}>
      <Bar $w={616}>
        <Grip />
        <Cells names="new open save print" /><Sep />
        <Cells names="cut copy paste del" /><Sep />
        <Cells names="undo redo" /><Sep />
        <Cells names="add" /><Drop><Caret /></Drop><Sep />
        <Combo w={148}>1:112,944</Combo><Sep />
        <Cell $on><Icon name="edit" /></Cell><Sep />
        <Cells names="toc catalog searchwin toolbox python" /><Sep />
        <Cells names="model" />
        <Overflow />
      </Bar>
      <Bar $w={146}>
        <Grip />
        <MenuButton $w={70}>Animation<Caret /></MenuButton><Sep $w={7} />
        <Cells names="camera" /><Sep /><Cells names="play" />
        <Overflow />
      </Bar>
      <Bar $w={182}>
        <Grip />
        <Cells names="geo3d" /><Sep /><Cells names="topo1" /><Drop $w={9}><Caret c="#a8a8a8" /></Drop><Sep />
        <Cells names="topo2 topo3 topo4 topo5" />
        <Overflow more />
      </Bar>
      <Bar $w={355}>
        <Grip />
        <MenuButton $w={96}>Georeferencing<Caret /></MenuButton><Sep $w={7} />
        <Combo w={180} kind="shaded">elevation</Combo>
        <Cells names="link autoreg" />
        <Overflow more />
      </Bar>
      <Bar $w={446}>
        <Grip />
        <MenuButton $w={71}>3D Analyst<Caret /></MenuButton><Sep $w={7} />
        <Combo w={178} kind="classic" icon="diamond">elevation</Combo><Spacer $w={2} />
        <Cells names="contour steep sight point3 line3 poly3" />
        <Overflow more />
      </Bar>
      <Bar $w={146}>
        <Grip />
        <MenuButton $w={126}>Geostatistical Analyst<Caret /></MenuButton>
        <Overflow more />
      </Bar>
    </BarRow>
    <BarRow $start={4} $gap={4}>
      <Bar $w={524}>
        <Grip />
        <Cells names="zoomin zoomout" /><Cell $on><Icon name="hand" /></Cell><Cells names="globe" /><Sep />
        <Cells names="fixin fixout" /><Sep />
        <Cells names="back fwd" /><Sep />
        <Cells names="select" /><Drop><Caret /></Drop><Cells names="clear" /><Sep />
        <Cells names="pointer" /><Sep />
        <Cells names="info bolt html" /><Sep />
        <Cells names="measure" /><Sep />
        <Cells names="find route xy" /><Sep />
        <Cells names="clock" /><Sep />
        <Cells names="viewer" />
        <Overflow />
      </Bar>
      <Bar $w={383}>
        <Grip />
        <Cells names="pzin pzout phand pfull pone" /><Sep />
        <Cells names="pfixin pfixout" /><Sep />
        <Cells names="pback pfwd" /><Spacer $w={1} />
        <Combo w={59} kind="faint"><Percent>100%</Percent></Combo><Sep $w={6} />
        <Cell $pale><Icon name="draft" /></Cell>
        <Cells names="focus layout pages" />
        <Overflow />
      </Bar>
      <Bar $w={243}>
        <Grip />
        <Combo w={178} kind="classic" icon="diamond">elevation</Combo><Spacer $w={2} />
        <Cells names="contour2 histogram" />
        <Overflow />
      </Bar>
      <Bar $w={686}>
        <Grip />
        <MenuButton $w={60}>Drawing<Caret /></MenuButton>
        <Cells names="pointer rotate graphics" /><Sep />
        <Cells names="rect" /><Drop $w={10}><Caret /></Drop>
        <Cell><BigA>A</BigA></Cell><Drop><Caret /></Drop>
        <Cells names="verts" /><Sep $w={7} />
        <Combo w={171} icon="fontdoc">Arial</Combo>
        <Combo w={46}>10</Combo>
        <Cell><Glyph>B</Glyph></Cell><Cell><Glyph $i>I</Glyph></Cell><Cell><Glyph $u>U</Glyph></Cell><Sep $w={7} />
        <Cell><Swatched $c="#000">A</Swatched></Cell><Drop $w={16}><Caret /></Drop>
        <Cell><Swatched $c="#ffffb8"><Icon name="bucket" size={13} /></Swatched></Cell><Drop $w={16}><Caret /></Drop>
        <Cell><Swatched $c="#000"><Icon name="pen" size={14} /></Swatched></Cell><Drop $w={16}><Caret /></Drop>
        <Cell><Swatched $c="#55ff00"><Icon name="dot" /></Swatched></Cell><Drop $w={16}><Caret /></Drop>
        <Overflow />
      </Bar>
    </BarRow>
    <BarRow $start={84}>
      <Bar $w={473}>
        <Grip />
        <MenuButton $w={102}>Network Analyst<Caret /></MenuButton><Sep />
        <Cells names="nawin" /><Sep />
        <Cells names="naflag nasel nasolve nadir" /><Sep />
        <Combo w={180} kind="disabled" />
        <Cells names="nainfo natool" />
        <Overflow />
      </Bar>
      <Bar $w={395}>
        <Grip />
        <MenuButton $w={85}>Classification<Caret /></MenuButton><Sep />
        <Combo w={178} kind="classic" icon="diamond">elevation</Combo><Spacer $w={2} />
        <Cells names="classes clearcls" /><Sep $w={5} />
        <Cells names="polygon" /><Drop $w={12}><Caret /></Drop>
        <Cells names="clspick" />
        <Overflow />
      </Bar>
    </BarRow>
    <BarRow $start={509}>
      <Bar $w={414}>
        <Grip />
        <MenuButton $w={46}>Editor<Caret /></MenuButton><Sep />
        <Cells names="ed1 ed2" /><Sep />
        <Cells names="edline edarc edtrace" /><Drop $w={10}><Caret c="#a8a8a8" /></Drop>
        <Cells names="edpoint" /><Sep />
        <Cells names="edv1 edv2 edv3 edv4 edv5" /><Sep $w={5} />
        <Cells names="edt1 edt2" /><Sep $w={5} />
        <Cells names="edt3" />
        <Overflow />
      </Bar>
    </BarRow>
  </>
);

/* ---------- dockable panels ---------- */

const Workspace = styled.main`
  height: 868px;
  display: flex;
`;
const LeftDock = styled.aside`
  width: 206px;
  padding-right: 4px;
  display: flex;
  flex-direction: column;
`;
const PanelTitle = styled.div`
  flex: none;
  height: 20px;
  padding: 1px 5px 0 4px;
  display: flex;
  align-items: center;
  gap: 8px;
  font-size: 12px;
  letter-spacing: -0.25px;
  background: linear-gradient(90deg, #bccbda, #d6e4f1);
`;
const Grow = styled.span`
  flex: 1;
`;
const PanelHead = ({ title }: { title: string }) => (
  <PanelTitle>
    <Grow>{title}</Grow>
    <Svg width="7" height="9" viewBox="0 0 7 9">
      <path d="M1.500 .5h4v5h-4zM0 5.500h7M3.500 6v3" fill="none" stroke="#000" />
      <path d="M4.700 1v4" stroke="#000" />
    </Svg>
    <Svg width="9" height="9" viewBox="0 0 9 9">
      <path d="M.8 .8l7.400 7.400M8.200 .8L.8 8.200" stroke="#000" strokeWidth="1.500" />
    </Svg>
  </PanelTitle>
);
const TocTools = styled.div`
  height: 26px;
  padding-left: 4px;
  display: flex;
  align-items: center;
  width: 130px;
`;
const TreeBox = styled.div<{ $h: number }>`
  height: ${p => p.$h}px;
  width: 202px;
  padding: 1px;
  display: flex;
  flex-direction: column;
  justify-content: space-between;
  background: #fff;
  border: 1px solid #828790;
`;
const TreeView = styled.div`
  flex: 1;
  min-height: 0;
  display: flex;
`;
const Tree = styled.div`
  flex: 1;
  min-width: 0;
  overflow: hidden;
`;
const Row = styled.div<{ $indent: number }>`
  height: 18px;
  padding-left: ${p => p.$indent}px;
  display: flex;
  align-items: center;
  white-space: nowrap;
`;
const ExpanderBox = styled.i`
  flex: none;
  width: 9px;
  height: 9px;
  margin-top: 3px;
  border: 1px solid #919191;
  border-radius: 1px;
  background: linear-gradient(#4b63a7, #4b63a7) 50% 50% / 5px 1px no-repeat, #f6f6f6;
  &[data-plus] {
    background: linear-gradient(#4b63a7, #4b63a7) 50% 50% / 5px 1px no-repeat,
      linear-gradient(#4b63a7, #4b63a7) 50% 50% / 1px 5px no-repeat, #f6f6f6;
  }
`;
const Check = ({ on }: { on?: boolean }) => (
  <Svg width="11" height="11" viewBox="0 0 11 11">
    <rect x=".5" y=".5" width="10" height="10" fill="#fff" stroke="#000" />
    {on && <path d="M2.500 4.500l2.200 3L8.500 3" fill="none" stroke="#000" strokeWidth="1.800" />}
  </Svg>
);
const Label = styled.span<{ $bold?: boolean; $sel?: boolean; $hot?: boolean; $tight?: boolean }>`
  height: 18px;
  padding: 0 2px;
  line-height: 16px;
  font-weight: ${p => (p.$bold ? 700 : 400)};
  letter-spacing: ${p => (p.$tight ? '-0.35px' : p.$bold ? '-0.2px' : '-0.1px')};
  ${p => p.$sel && css`background: #0078d7; color: #fff;`}
  ${p => p.$hot && css`background: #f0f0f0;`}
`;
const Patch = styled.i<{ $c: string }>`
  flex: none;
  width: 15px;
  height: 11px;
  margin: 1px 1px 0 0;
  border: 1px solid #6e6e6e;
  background: ${p => p.$c};
`;
const Gap = styled.i<{ $w: number }>`
  flex: none;
  width: ${p => p.$w}px;
`;

const classes: [string, string][] = [
  ['1', '#60a989'], ['2', '#f155ed'], ['3', '#8b3939'], ['4', '#2d4180'], ['5', '#e8b152'],
  ['6', '#7def59'], ['7', '#df8bbc'], ['8', '#6ca5f0'], ['9', '#5f66f9'], ['10', '#833380'],
];

const LayerRow = ({ name, on, sel }: { name: string; on?: boolean; sel?: boolean }) => (
  <Row $indent={26}>
    <ExpanderBox /><Gap $w={8} /><Check on={on} /><Gap $w={6} /><Label $sel={sel}>{name}</Label>
  </Row>
);

/* ---------- scrollbars ---------- */

const Track = styled.div<{ $col?: boolean; $size: number; $btn?: number }>`
  flex: none;
  display: flex;
  background: #f0f0f0;
  ${p => (p.$col
    ? css`width: ${p.$size}px; flex-direction: column;`
    : css`height: ${p.$size}px;`)}
`;
const End = styled.span<{ $len: number }>`
  flex: 0 0 ${p => p.$len}px;
  display: flex;
  align-items: center;
  justify-content: center;
`;
const Thumb = styled.span<{ $len: number }>`
  flex: 0 0 ${p => p.$len}px;
  background: #cbcbcb;
`;
const Rest = styled.span`
  flex: 1;
`;
const Scroll = ({ col, size = 15, btn = 17, thumb, chev = 8 }: { col?: boolean; size?: number; btn?: number; thumb: number; chev?: number }) => (
  <Track $col={col} $size={size}>
    <End $len={btn}><Chevron dir={col ? 'up' : 'left'} size={chev} /></End>
    <Thumb $len={thumb} />
    <Rest />
    <End $len={btn}><Chevron dir={col ? 'down' : 'right'} size={chev} /></End>
  </Track>
);
const TocFoot = styled.div`
  width: 183px;
`;

const Toc = () => (
  <>
    <PanelHead title="Table Of Contents" />
    <TocTools>
      <Cell $on><Icon name="bydraw" /></Cell>
      <Cells names="bysource byvis bysel" /><Sep />
      <Cells names="options" />
    </TocTools>
    <TreeBox $h={354}>
      <TreeView>
        <Tree>
          <Row $indent={7}><ExpanderBox /><Gap $w={7} /><Icon name="layers" /><Gap $w={2} /><Label $bold>Layers</Label></Row>
          <LayerRow name="schools" on />
          <Row $indent={57}>
            <Svg width="12" height="18" viewBox="0 0 12 18">
              <path d="M5.500 0v13" stroke="#804040" />
              <path d="M5 1l6 2.500L5 6zM1 12h8v5H1z" fill="#000" />
            </Svg>
          </Row>
          <LayerRow name="rec_sites" />
          <Row $indent={60}>
            <Svg width="6" height="6" viewBox="0 0 6 6"><path d="M3 .3L5.700 3 3 5.700 .3 3z" fill="#4a0fb0" stroke="#1c0550" /></Svg>
          </Row>
          <LayerRow name="SchDisR" on sel />
          {classes.map(([n, c]) => (
            <Row key={n} $indent={58}><Patch $c={c} /><Label $tight>{n}</Label></Row>
          ))}
          <LayerRow name="recDis" on />
          <Row $indent={58}><Patch $c="#ffc800" /><Label $tight>0 - 1,348.762793</Label></Row>
          <Row $indent={58}><Patch $c="#ff9b00" /><Label $tight>1,348.762794 - 2,697</Label></Row>
        </Tree>
        <Scroll col thumb={86} />
        <Spacer $w={2} />
      </TreeView>
      <TocFoot><Scroll thumb={116} /></TocFoot>
    </TreeBox>
  </>
);

const sessions = [
  'Reclassify [164944_102920', 'Euclidean Distance [16475', 'Euclidean Distance [16460',
  'Reclassify [164309_102920', 'Slope [163930_10292019]', 'Reclassify [163704_102920',
  'Reclassify [163349_102920', 'Reclassify [163312_102920',
];
const ResultsGap = styled.div`
  height: 6px;
`;
const Results = () => (
  <>
    <PanelHead title="Results" />
    <TreeBox $h={441}>
      <TreeView>
        <Tree>
          <Row $indent={7}><ExpanderBox /><Gap $w={6} /><Icon name="session" /><Gap $w={3} /><Label>Current Session</Label></Row>
          {sessions.map((s, i) => (
            <Row key={s} $indent={26}>
              <ExpanderBox data-plus /><Gap $w={6} /><Icon name="hammer" /><Gap $w={3} /><Label $tight $hot={i === 6}>{s}</Label>
            </Row>
          ))}
          <Row $indent={22}><Icon name="session" /><Gap $w={3} /><Label>Shared</Label></Row>
        </Tree>
      </TreeView>
      <Scroll thumb={123} />
    </TreeBox>
  </>
);

/* ---------- map ---------- */

const STEP_X = 56.75;
const STEP_Y = 56.6;
const schools = [[364.900, 434.200], [477.200, 443.400], [717.700, 75.700], [726.800, 74], [739.900, 69.200]];

const MapFrame = styled.section`
  width: 1228px;
  display: flex;
  flex-direction: column;
  border: solid;
  border-width: 1px 1px 1px 2px;
  border-color: #6c6c6c #e0e0e0 #e0e0e0 #6c6c6c;
`;
const MapRow = styled.div`
  height: 848px;
  display: flex;
  justify-content: space-between;
`;
const Canvas = styled.div`
  width: 1209px;
  padding: 39px 0 0 210px;
  background: #fff;
`;
const ViewBar = styled.div`
  height: 18px;
  padding-top: 1px;
  display: flex;
`;
const ViewButtons = styled.div`
  width: 76px;
  height: 13px;
  display: flex;
  align-items: center;
`;
const ViewButton = styled.span<{ $on?: boolean }>`
  width: 15px;
  height: 13px;
  display: flex;
  align-items: center;
  justify-content: center;
  ${p => p.$on && css`background: #cde6fa; outline: 1px solid #90c8f6; outline-offset: -1px;`}
`;
const HTrack = styled.div`
  width: 1133px;
  margin-right: auto;
`;

const MapView = () => (
  <MapFrame>
    <MapRow>
      <Canvas>
        <Svg width="789" height="770" viewBox="0 0 789 770" shapeRendering="crispEdges">
          <rect width="789" height="770" fill={classes[9][1]} />
          {[9, 8, 7, 6, 5, 4, 3, 2, 1].map(k => (
            <g key={k} fill={classes[k - 1][1]}>
              {schools.map(([x, y]) => <ellipse key={x} cx={x} cy={y} rx={k * STEP_X} ry={k * STEP_Y} />)}
            </g>
          ))}
          {schools.map(([x, y]) => (
            <path
              key={x}
              transform={`translate(${Math.round(x + 0.6)} ${Math.round(y - 1)})`}
              d="M-7 5h8v5h-8zM-3-6h1V5h-1zM-2-6l6 2.500-6 2.500z"
              fill="#000"
            />
          ))}
        </Svg>
      </Canvas>
      <Scroll col thumb={813} size={14} btn={17} />
    </MapRow>
    <ViewBar>
      <ViewButtons>
        <ViewButton $on><Icon name="dataview" size={12} /></ViewButton>
        <ViewButton><Icon name="layoutview" size={12} /></ViewButton>
        <Sep $w={7} />
        <ViewButton><Icon name="refreshview" size={11} /></ViewButton>
        <ViewButton><Icon name="pause" size={11} /></ViewButton>
      </ViewButtons>
      <HTrack><Scroll thumb={1099} btn={16} /></HTrack>
    </ViewBar>
  </MapFrame>
);

/* ---------- search ---------- */

const SearchDock = styled.aside`
  width: 464px;
  padding-left: 6px;
  background: #f8f8f8;
`;
const SearchPanel = styled.div`
  width: 458px;
  height: 868px;
  background: #f0f0f0;
  font-family: 'DejaVu Sans', sans-serif;
  letter-spacing: 0;
`;
const SearchHead = styled.div`
  font-family: 'Open Sans', sans-serif;
`;
const SearchTools = styled.div`
  height: 28px;
  padding: 2px 1px 0 2px;
  display: flex;
  align-items: center;
`;
const ToolIcons = styled.div`
  display: flex;
  align-items: center;
  margin-top: -4px;
`;
const Divider = styled.i`
  width: 1px;
  height: 23px;
  margin: 0 4px;
  background: #9a9a9a;
`;
const LocalCombo = styled.div`
  flex: 1;
  height: 23px;
  margin-left: 8px;
  padding: 2px 4px 0 4px;
  display: flex;
  align-items: center;
  justify-content: space-between;
  background: #e1e1e1;
  border: 1px solid #adadad;
  font: 12.500px 'Liberation Sans', sans-serif;
  letter-spacing: 0.150px;
`;
const SearchBody = styled.div`
  height: 820px;
  display: flex;
`;
const SearchMain = styled.div`
  width: 442px;
  display: flex;
  flex-direction: column;
  border-top: 1px solid #b6b6b6;
`;
const Query = styled.div`
  height: 78px;
  padding: 4px 0 0 9px;
  background: #fff;
`;
const Tabs = styled.div`
  height: 21px;
  padding-bottom: 1px;
  display: flex;
  align-items: center;
  padding-left: 1px;
  font-size: 10px;
`;
const Tab = styled.span<{ $w: number; $cur?: boolean }>`
  width: ${p => p.$w}px;
  ${p => (p.$cur
    ? css`font: bold 10.500px 'Open Sans', sans-serif; color: #000;`
    : css`color: #1466cc; text-decoration: underline; letter-spacing: 0.100px;`)}
`;
const InputLine = styled.div`
  display: flex;
  align-items: center;
  gap: 10px;
`;
const Input = styled.div`
  width: 378px;
  height: 23px;
  padding-left: 1px;
  border: 2px solid;
  border-width: 2px 1px 1px 2px;
  border-color: #696969 #a0a0a0 #a0a0a0 #696969;
  background: #fff;
  color: #0a246a;
  font: 13px/19px 'Liberation Sans', sans-serif;
`;
const GoButton = styled.span`
  width: 21px;
  height: 21px;
  border: 1px solid #8fb4ce;
  border-radius: 50%;
  display: flex;
  align-items: center;
  justify-content: center;
  background: linear-gradient(#eef8fd, #bcdff2);
`;
const LinkText = styled.span`
  color: #1466cc;
  font-size: 10px;
  text-decoration: underline;
  margin-right: 5px;
  letter-spacing: 0.050px;
`;
const LinkLine = styled.div<{ $h: number }>`
  height: ${p => p.$h}px;
  display: flex;
  align-items: center;
`;
const Summary = styled.div`
  height: 24px;
  padding: 0 13px 0 9px;
  display: flex;
  justify-content: space-between;
  border: solid #b6b6b6;
  border-width: 1px 0;
`;
const Hits = styled.div`
  flex: 1;
  min-height: 0;
  overflow: hidden;
  border-bottom: 1px solid #b0b0b0;
  background: #fff;
`;
const HitRow = styled.article<{ $alt: boolean }>`
  height: 56px;
  padding: 0 0 0 5px;
  display: flex;
  gap: 5px;
  background: ${p => (p.$alt ? '#eeeeee' : '#fff')};
  white-space: nowrap;
  &:first-child { height: 53px; }
  &:first-child > * { margin-top: -3px; }
`;
const HitIcon = styled.span`
  padding-top: 6px;
`;
const HitName = styled.div`
  height: 20px;
  padding-top: 3px;
  line-height: 18px;
  font-size: 12.500px;
  letter-spacing: 0.050px;
  color: #1466cc;
  b { letter-spacing: -0.450px; }
`;
const Kind = styled.span`
  font-size: 11.500px;
  letter-spacing: 0.100px;
  color: #0a820a;
`;
const Desc = styled.div`
  height: 14px;
  line-height: 13px;
  font-size: 11px;
  letter-spacing: 0.220px;
  color: #17346a;
`;
const Path = styled.div`
  height: 16px;
  line-height: 15px;
  font-size: 11px;
  letter-spacing: 0.220px;
  color: #0a820a;
  b { letter-spacing: 0; }
`;

type Hit = { b?: string; n: string; d: string; p?: string; pb?: string };
const ST = 'toolboxes\\system toolboxes\\';
const hits: Hit[] = [
  { b: 'Reclassify', n: ' (3D Analyst)', d: 'Reclassifies (or changes) the values in a raster.', p: '3d analyst tools.tbx\\raster reclass\\', pb: 'recla' },
  { b: 'Reclassify', n: ' (Spatial Analyst)', d: 'Reclassifies (or changes) the values in a raster.', p: 'spatial analyst tools.tbx\\reclass\\', pb: 'reclassi' },
  { n: 'Reclass by Table (3D Analyst)', d: 'Reclassifies (or changes) the values of the input cells of a raster usin...', p: '3d analyst tools.tbx\\raster reclass\\reclas...' },
  { n: 'Reclass by ASCII File (Spatial Analyst)', d: 'Reclassifies (or changes) the values of the input cells of a raster usin...', p: 'spatial analyst tools.tbx\\reclass\\reclass b...' },
  { n: 'Reclass by Table (Spatial Analyst)', d: 'Reclassifies (or changes) the values of the input cells of a raster usin...', p: 'spatial analyst tools.tbx\\reclass\\reclass b...' },
  { n: 'Slice (Spatial Analyst)', d: 'Slices or reclassifies the range of values of the input cells into zones ...', p: 'spatial analyst tools.tbx\\reclass\\slice' },
  { n: 'Reclass by ASCII File (3D Analyst)', d: 'Reclassifies (or changes) the values of the input cells of a raster usin...', p: '3d analyst tools.tbx\\raster reclass\\reclas...' },
  { n: 'Slice (3D Analyst)', d: 'Slices or reclassifies the range of values of the input cells into zones ...', p: '3d analyst tools.tbx\\raster reclass\\slice' },
  { n: 'Lookup (3D Analyst)', d: 'Creates a new raster by looking up values found in another field in th...', p: '3d analyst tools.tbx\\raster reclass\\lookup' },
  { n: 'Lookup (Spatial Analyst)', d: 'Creates a new raster by looking up values found in another field in th...', p: 'spatial analyst tools.tbx\\reclass\\lookup' },
  { n: 'Rescale by Function (Spatial Analyst)', d: 'Rescales the input raster values by applying a selected transformatio...', p: 'spatial analyst tools.tbx\\reclass\\rescale ...' },
  { n: 'Weighted Overlay (Spatial Analyst)', d: 'Overlays several rasters using a common measurement scale and we...', p: 'spatial analyst tools.tbx\\overlay\\weighte...' },
  { n: 'Weighted Sum (Spatial Analyst)', d: 'Overlays several rasters, multiplying each by their given weight and s...' },
];
const Pager = styled.div`
  height: 18px;
  padding-left: 217px;
  padding-top: 2px;
  color: #f00;
  font-size: 11px;
`;
const ScrollHolder = styled.div`
  padding: 0 0 0 1px;
  display: flex;
  > div { height: 802px; margin-top: 10px; }
`;

const Search = () => (
  <SearchDock>
    <SearchPanel>
      <SearchHead><PanelHead title="Search" /></SearchHead>
      <SearchTools>
        <ToolIcons>
          <Icon name="back" /><Spacer $w={6} /><Icon name="fwd" />
          <Spacer $w={4} /><Divider /><Spacer $w={2} />
          <Icon name="home" /><Spacer $w={7} /><Icon name="refresh" />
          <Spacer $w={2} /><Divider />
          <Icon name="options" /><Spacer $w={5} /><Caret w={8} />
        </ToolIcons>
        <LocalCombo>Local Search<Chevron dir="down" t={1} size={11} /></LocalCombo>
      </SearchTools>
      <SearchBody>
        <SearchMain>
          <Query>
            <Tabs>
              <Tab $w={39} $cur>ALL</Tab><Tab $w={46}>Maps</Tab><Tab $w={43}>Data</Tab><Tab $w={47}>Tools</Tab><Tab $w={60}>Images</Tab>
            </Tabs>
            <InputLine><Input>reclassify</Input><GoButton><Icon name="magnify" size={13} /></GoButton></InputLine>
            <LinkLine $h={23}><LinkText>Any Extent</LinkText><Caret w={8} /></LinkLine>
          </Query>
          <Summary>
            <LinkLine $h={23}><LinkText>Search returned 15 items</LinkText><Caret w={8} /></LinkLine>
            <LinkLine $h={23}><LinkText>Sort By</LinkText><Caret w={8} /></LinkLine>
          </Summary>
          <Hits>
            {hits.map((h, i) => (
              <HitRow key={h.n} $alt={i % 2 === 1}>
                <HitIcon><Icon name="hammer" /></HitIcon>
                <div>
                  <HitName>{h.b && <b>{h.b}</b>}{h.n} <Kind>(Tool)</Kind></HitName>
                  <Desc>{h.d}</Desc>
                  {h.p && <Path>{ST}{h.p}{h.pb && <><b>{h.pb}</b>...</>}</Path>}
                </div>
              </HitRow>
            ))}
          </Hits>
          <Pager>1</Pager>
        </SearchMain>
        <ScrollHolder><Scroll col thumb={644} btn={23} chev={13} /></ScrollHolder>
      </SearchBody>
    </SearchPanel>
  </SearchDock>
);

const SideTabs = styled.div`
  flex: 1;
  padding-top: 2px;
  display: flex;
  flex-direction: column;
  align-items: flex-end;
  gap: 14px;
  background: #fafafa;
`;
const SideTab = styled.div<{ $h: number }>`
  width: 20px;
  height: ${p => p.$h}px;
  padding: 4px 0 0 1px;
  display: flex;
  flex-direction: column;
  align-items: center;
  gap: 3px;
  border: 1px solid #8f8f8f;
  border-right: 0;
  border-radius: 4px 0 0 4px;
  background: #f2f2f2;
  color: #6a6a6a;
`;
const Vertical = styled.span`
  writing-mode: vertical-rl;
  line-height: 14px;
  letter-spacing: 0.05px;
`;

const StatusBar = styled.footer`
  height: 20px;
  padding: 2px 0 0 1515px;
  display: flex;
  gap: 3px;
  background: #f0f0f0;
`;
const Pane = styled.span<{ $w: number }>`
  flex: none;
  width: ${p => p.$w}px;
  padding-left: 2px;
  border: 1px solid #f8f8f8;
  white-space: pre;
  line-height: 16px;
  letter-spacing: -0.430px;
`;

const menus: [string, number][] = [
  ['File', 34], ['Edit', 36], ['View', 41], ['Bookmarks', 75], ['Insert', 45], ['Selection', 64],
  ['Geoprocessing', 94], ['Customize', 72], ['Windows', 65], ['Help', 30],
];

export default function App() {
  return (
    <>
      <Global />
      <Shell>
        <TitleBar>
          <Icon name="app" />
          <span>Untitled - ArcMap</span>
          <WindowButtons>
            <Svg width="10" height="10" viewBox="0 0 10 10"><path d="M0 5.500h10" stroke="#000" /></Svg>
            <Svg width="10" height="10" viewBox="0 0 10 10"><path d="M.5 2.500h7v7h-7zM2.500 2.500v-2h7v7h-2" fill="none" stroke="#000" /></Svg>
            <Svg width="10" height="10" viewBox="0 0 10 10"><path d="M.5 .5l9 9M9.500 .5l-9 9" stroke="#000" /></Svg>
          </WindowButtons>
        </TitleBar>
        <Dock>
          <MenuBar>{menus.map(([m, w]) => <MenuItem key={m} $w={w}>{m}</MenuItem>)}</MenuBar>
          <Toolbars />
        </Dock>
        <Workspace>
          <LeftDock>
            <Toc />
            <ResultsGap />
            <Results />
          </LeftDock>
          <MapView />
          <Search />
          <SideTabs>
            <SideTab $h={89}><Icon name="toolbox" /><Vertical>ArcToolbox</Vertical></SideTab>
            <SideTab $h={72}><Icon name="catalog" /><Vertical>Catalog</Vertical></SideTab>
          </SideTabs>
        </Workspace>
        <StatusBar>
          <Pane $w={126} /><Pane $w={17} /><Pane $w={252}>496222.894  221774.814 Meters</Pane>
        </StatusBar>
      </Shell>
    </>
  );
}
